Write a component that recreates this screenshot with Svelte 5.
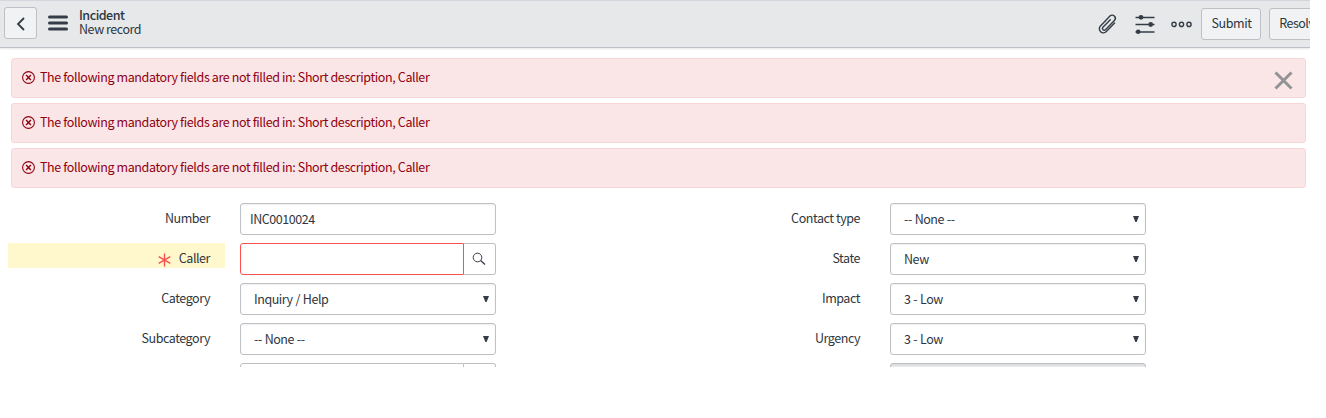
<script>
  const message = 'The following mandatory fields are not filled in: Short description, Caller';
  const alerts = [0, 1, 2];
  const columns = [
    [
      { label: 'Number', value: 'INC0010024', kind: 'input' },
      { label: 'Caller', value: '', kind: 'lookup', mandatory: true },
      { label: 'Category', value: 'Inquiry / Help', kind: 'select' },
      { label: 'Subcategory', value: '-- None --', kind: 'select' },
      { label: '', value: '', kind: 'lookup' }
    ],
    [
      { label: 'Contact type', value: '-- None --', kind: 'select' },
      { label: 'State', value: 'New', kind: 'select' },
      { label: 'Impact', value: '3 - Low', kind: 'select' },
      { label: 'Urgency', value: '3 - Low', kind: 'select' },
      { label: '', value: '', kind: 'readonly' }
    ]
  ];
</script>

<div class="page">
  <header>
    <button class="btn back" aria-label="Back">
      <svg width="10" height="16" viewBox="0 0 10 16"><path d="M8 2 2 8l6 6" fill="none" stroke="#343d47" stroke-width="1.8" /></svg>
    </button>
    <svg class="menu" width="20" height="16" viewBox="0 0 20 16"><path d="M1.5 2h17M1.5 8h17M1.5 14h17" stroke="#343d47" stroke-width="3" stroke-linecap="round" /></svg>
    <div class="title"><strong>Incident</strong><span>New record</span></div>
    <div class="tools">
      <svg class="clip" width="22" height="22" viewBox="0 0 22 22"><g transform="translate(10.6 11) rotate(44)" fill="none" stroke="#343d47" stroke-width="1.4" stroke-linecap="round"><path d="M4.4-5.5V6.3a4.1 4.1 0 0 1-8.2 0V-7.3a3.1 3.1 0 0 1 6.2 0V5.6a1.75 1.75 0 0 1-3.5 0V-5" /></g></svg>
      <svg class="sliders" width="20" height="20" viewBox="0 0 20 20"><path d="M.5 3.5h19M.5 10.5h19M.5 18h19" stroke="#343d47" stroke-width="1.7" /><g fill="#343d47"><circle cx="6" cy="3.3" r="2.4" /><circle cx="15.7" cy="10.5" r="2.4" /><circle cx="3.2" cy="17.7" r="2.3" /></g></svg>
      <svg class="dots" width="21" height="8" viewBox="0 0 21 8"><g fill="none" stroke="#343d47" stroke-width="1.4"><circle cx="3" cy="4.4" r="2.1" /><circle cx="10.5" cy="4.4" r="2.1" /><circle cx="18" cy="4.4" r="2.1" /></g></svg>
      <button class="btn submit">Submit</button>
      <button class="btn resolve">Resolve</button>
    </div>
  </header>

  <div class="alerts">
    {#each alerts as i}
      <div class="alert">
        <svg width="13" height="13" viewBox="0 0 13 13"><circle cx="6.5" cy="6.5" r="5.9" fill="none" stroke="#8f0010" stroke-width="1.1" /><path d="m4.1 4.1 4.8 4.8m0-4.8L4.1 8.9" stroke="#8f0010" stroke-width="1.4" /></svg>
        <span>{message}</span>
        {#if i === 0}
          <svg class="close" width="20" height="20" viewBox="0 0 20 20"><path d="m1.5 2.5 16 16m0-16-16 16" stroke="#929297" stroke-width="3" /></svg>
        {/if}
      </div>
    {/each}
  </div>

  <main>
    {#each columns as fields}
      <div class="column">
        {#each fields as field}
          <div class="row">
            <div class="label" class:mandatory={field.mandatory}>
              {#if field.mandatory}
                <svg width="13" height="14" viewBox="0 0 13 14"><path d="M6.5.5v13M.7 3.7l11.6 6.6M12.3 3.7.7 10.3" stroke="#f95050" stroke-width="1.4" /></svg>
              {/if}
              <span>{field.label}</span>
            </div>
            <div class="control {field.kind}" class:error={field.mandatory}>
              <span class="value">{field.value}</span>
              {#if field.kind === 'select'}
                <svg class="arrow" width="6" height="6" viewBox="0 0 6 6"><path d="M0 0h6L3.6 6H2.4Z" fill="#343d47" /></svg>
              {:else if field.kind === 'lookup'}
                <span class="search">
                  <svg width="14" height="14" viewBox="0 0 14 14"><circle cx="5.5" cy="5.5" r="4.3" fill="none" stroke="#343d47" stroke-width="1" /><path d="m8.6 8.6 4.4 4" stroke="#343d47" stroke-width="1.3" /></svg>
                </span>
              {/if}
            </div>
          </div>
        {/each}
      </div>
    {/each}
  </main>
</div>

<style>
  :global(body) { background: #fff; }
  .page {
    width: 1310px; height: 367px; overflow: hidden;
    font-family: "Noto Sans CJK SC", "Noto Sans", sans-serif;
    font-size: 12.5px; line-height: 18px; letter-spacing: -0.385px; color: #2e3640;
  }
  .page * { box-sizing: border-box; }
  svg { display: block; flex: none; }
  header {
    display: flex; align-items: flex-start; height: 48px; padding-left: 4px;
    background: #e6e8ea; border-top: 1px solid #d3d6dc; border-bottom: 1px solid #bcc0c8;
    box-shadow: 0 1px 2px #0000001a;
  }
  .btn {
    flex: none; display: flex; align-items: center; justify-content: center;
    height: 32px; margin: 7px 0 0; padding: 0 0 2px; color: inherit; font: inherit;
    letter-spacing: inherit; white-space: nowrap;
    background: #f0f2f3; border: 1px solid #bdc0c4; border-radius: 3px;
  }
  .back { width: 33px; margin-top: 6px; padding: 1px 0 0; }
  .menu { margin: 14px 0 0 11px; }
  .title { display: flex; flex-direction: column; margin: 7px 0 0 11px; line-height: 14px; letter-spacing: -0.45px; }
  .title strong { font-weight: 500; letter-spacing: -0.5px; }
  .tools { display: flex; flex: none; margin-left: auto; width: 213px; }
  .clip { margin-top: 12px; }
  .sliders { margin: 13px 0 0 16px; }
  .dots { margin: 19px 0 0 16px; }
  .submit { width: 60px; margin-left: 9px; padding-left: 1px; letter-spacing: -0.4px; }
  .resolve { width: 65px; margin-left: 8px; padding-right: 3px; letter-spacing: -0.5px; }
  .alerts { display: flex; flex-direction: column; gap: 5px; padding: 10px 4px 0 11px; }
  .alert {
    display: flex; align-items: center; height: 40px; padding: 0 11px 2px 10px;
    background: #fae6e7; border: 1px solid #f6d6d9; border-radius: 3px; color: #8f0010;
  }
  .alert span { margin-left: 5px; }
  .close { margin: 6px 0 0 auto; }
  main { display: flex; padding: 15px 0 0 8px; }
  .column { width: 650px; display: flex; flex-direction: column; gap: 8px; }
  .row { display: flex; height: 32px; flex: none; }
  .label {
    display: flex; justify-content: flex-end; align-items: center;
    width: 217px; height: 25px; padding: 5px 15px 0 0; margin-right: 15px;
    letter-spacing: -0.45px;
  }
  .label span { line-height: 18px; }
  .label svg { margin: 3px 8px 0 0; }
  .mandatory { background: #fff8cc; }
  .control {
    display: flex; align-items: center; width: 256px; height: 32px; padding-left: 9px;
    border: 1px solid #bdc0c4; border-radius: 3px; box-shadow: inset 0 1px 2px #00000012;
    letter-spacing: -0.45px; word-spacing: 0.5px;
  }
  .select { padding-left: 13px; }
  .readonly { background: #e6e8ea; }
  .arrow { margin: 0 6px 0 auto; }
  .lookup { padding: 0; border: 0; box-shadow: none; }
  .lookup .value {
    width: 224px; height: 32px; border: 1px solid #bdc0c4; border-radius: 3px 0 0 3px;
  }
  .error .value { border-color: #f95050; }
  .search {
    display: flex; align-items: center; justify-content: center; width: 32px; height: 32px;
    padding-right: 1px; border: 1px solid #bdc0c4; border-left: 0; border-radius: 0 3px 3px 0;
  }
</style>
